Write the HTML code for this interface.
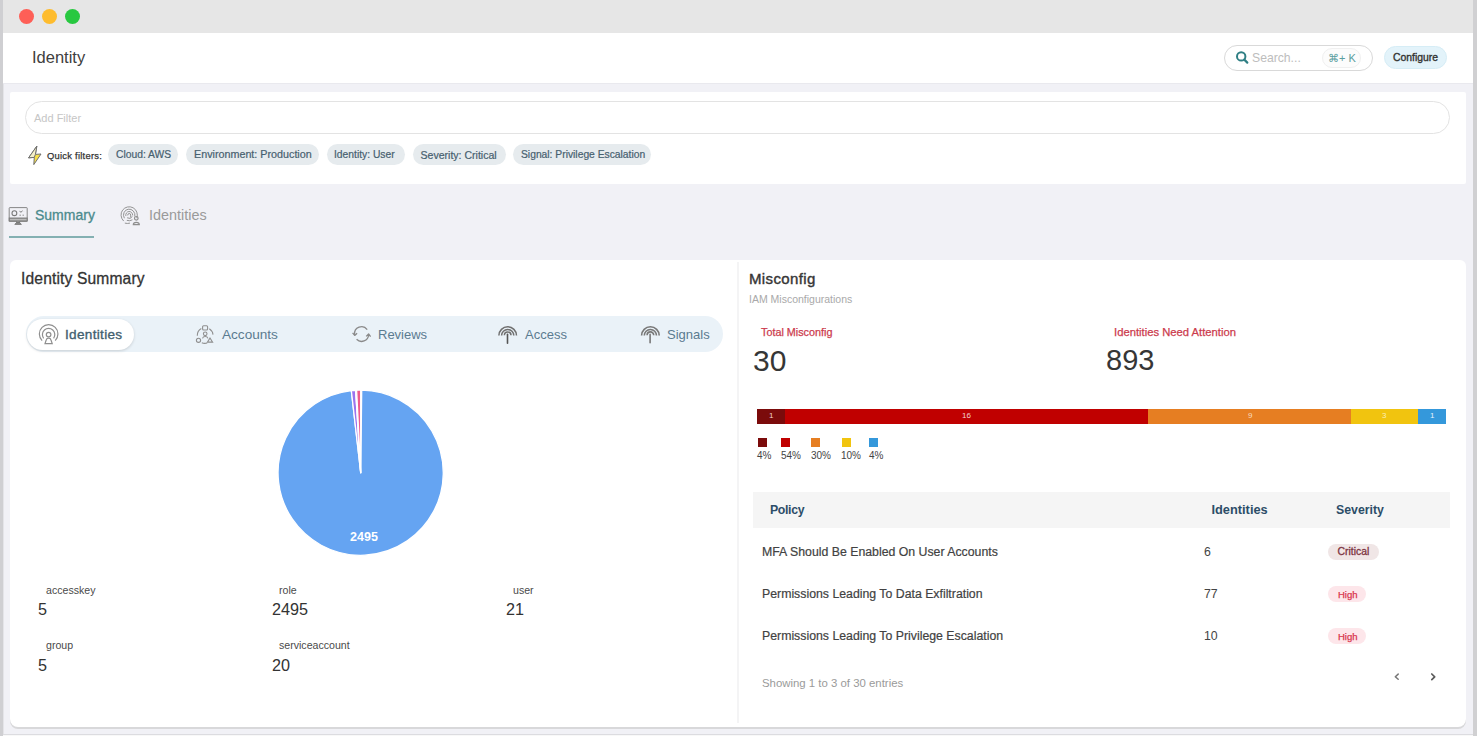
<!DOCTYPE html>
<html><head><meta charset="utf-8">
<style>
*{margin:0;padding:0;box-sizing:border-box}
html,body{width:1477px;height:736px;overflow:hidden;background:#f1f1f6;font-family:"Liberation Sans",sans-serif;color:#333}
.a{position:absolute}
.t{position:absolute;line-height:1;white-space:nowrap}
#lstrip{left:0;top:0;width:3px;height:736px;background:#cfcfd2}
#rstrip{left:1473px;top:0;width:4px;height:736px;background:#d0d0d2}
#titlebar{left:3px;top:0;width:1470px;height:33px;background:#e6e6e6}
.dot{position:absolute;top:9px;width:15px;height:15px;border-radius:50%}
#header{left:3px;top:33px;width:1470px;height:50px;background:#fff}
#fcard{left:10px;top:92px;width:1456px;height:92px;background:#fff;border-radius:2px}
#finput{left:25px;top:101px;width:1425px;height:33px;border:1px solid #e3e3e3;border-radius:17px;background:#fff}
.chip{position:absolute;top:144px;height:21px;border-radius:11px;background:#e6ebee}
.chipt{color:#46606f;-webkit-text-stroke:0.2px #46606f}
#main{left:10px;top:260px;width:1456px;height:467px;background:#fff;border-radius:6px 6px 8px 8px;box-shadow:0 2px 0 #d8d8da}
#divider{left:737px;top:262px;width:2px;height:461px;background:#f4f4f5}
#seg{left:26px;top:316px;width:697px;height:36px;border-radius:18px;background:#eaf2f8}
#segsel{left:27px;top:319px;width:107px;height:31px;border-radius:16px;background:#fff;box-shadow:0 1px 3px rgba(0,0,0,.15)}
#thead{left:753px;top:492px;width:697px;height:36px;background:#f5f5f5}
.badge{position:absolute;border-radius:8px}
</style></head><body>
<div class="a" id="lstrip"></div>
<div class="a" style="left:3px;top:83px;width:1px;height:653px;background:#e4e4e8"></div>
<div class="a" id="titlebar"></div>
<div class="a" id="rstrip"></div>
<div class="dot" style="left:19px;background:#fe5f57"></div>
<div class="dot" style="left:42px;background:#febc2e"></div>
<div class="dot" style="left:65px;background:#28c840"></div>

<div class="a" id="header"></div>
<div class="a" style="left:3px;top:83px;width:1470px;height:1px;background:#e9e9ee"></div>
<div class="t" style="left:32px;top:48.8px;font-size:16.5px;color:#404040">Identity</div>

<!-- search -->
<div class="a" style="left:1224px;top:45px;width:149px;height:26px;border:1px solid #d9d9d9;border-radius:13px;background:#fff"></div>
<svg class="a" style="left:1230px;top:45px" width="30" height="25" viewBox="0 0 30 25" fill="none" stroke="#2f7f84"><circle cx="11.2" cy="11.4" r="4.2" stroke-width="2"/><path d="M14.3 14.6L17.3 17.6" stroke-width="2.2" stroke-linecap="round"/></svg>
<div class="t" style="left:1252px;top:51.5px;font-size:12.2px;color:#bdbdbd">Search...</div>
<div class="a" style="left:1322px;top:48px;width:39px;height:20px;border-radius:10px;background:#fcfcfc;border:1px solid #f0f0f0"></div>
<div class="t" style="left:1328px;top:53px;font-size:11px;color:#5a9ea0">⌘+ K</div>
<!-- configure -->
<div class="a" style="left:1384px;top:46px;width:63px;height:23px;border-radius:12px;background:#e3f3fa;border:1px solid #d6edf6"></div>
<div class="t" style="left:1393px;top:53px;font-size:10.4px;color:#333;-webkit-text-stroke:0.35px #333">Configure</div>

<!-- filter card -->
<div class="a" id="fcard"></div>
<div class="a" id="finput"></div>
<div class="t" style="left:34px;top:112.8px;font-size:11px;color:#c6c6c6">Add Filter</div>
<svg class="a" style="left:14px;top:140px" width="35" height="30" viewBox="0 0 35 30"><path d="M22.8 6.2 L14.6 17.8 L20.3 17.4 L19.8 24.6 L27 14 L21.4 14.4 Z" fill="#f7e04a" stroke="#6f6f6f" stroke-width="1" stroke-linejoin="round"/><path d="M22.8 6.2 L14.6 17.8 L20.3 17.4 L21.4 14.4 Z" fill="#f4f0c8" stroke="#6f6f6f" stroke-width="1" stroke-linejoin="round"/></svg>
<div class="t" style="left:47px;top:150.5px;font-size:9.4px;letter-spacing:0.25px;color:#333;-webkit-text-stroke:0.25px #333">Quick filters:</div>
<div class="chip" style="left:108px;width:70px"></div>
<div class="t chipt" style="left:116px;top:150.2px;font-size:10.3px">Cloud: AWS</div>
<div class="chip" style="left:186px;width:133px"></div>
<div class="t chipt" style="left:194px;top:149.3px;font-size:10.75px">Environment: Production</div>
<div class="chip" style="left:327px;width:78px"></div>
<div class="t chipt" style="left:334px;top:150.2px;font-size:10.3px">Identity: User</div>
<div class="chip" style="left:413px;width:93px"></div>
<div class="t chipt" style="left:420.5px;top:149.5px;font-size:10.55px">Severity: Critical</div>
<div class="chip" style="left:513px;width:138px"></div>
<div class="t chipt" style="left:521px;top:150.2px;font-size:10.3px">Signal: Privilege Escalation</div>

<!-- tabs -->
<svg class="a" style="left:4px;top:200px" width="30" height="30" viewBox="0 0 30 30" fill="none" stroke="#7a7a7a" stroke-width="0.9"><rect x="5.2" y="7.6" width="18" height="13.6" rx="0.6"/><rect x="5.2" y="18" width="18" height="3.2" fill="#9a9a9a" stroke="#7a7a7a"/><path d="M6 19.6h16.4" stroke="#d8d8d8" stroke-width="0.6"/><circle cx="10.4" cy="13.2" r="2.4" stroke-width="1.1"/><path d="M15.5 11.3l1.5 0.9 1.6-1.4M20 11v0.1M15.5 15.2h1.3M18.6 15.2h1.2" stroke-width="1"/><path d="M12.5 21.2v1.4h3.2v-1.4M10.8 24.4h6.6l-1.7-1.8h-3.2z" fill="#8a8a8a"/></svg>
<div class="t" style="left:35px;top:208.1px;font-size:14px;color:#4b8b8d;-webkit-text-stroke:0.3px #4b8b8d">Summary</div>
<div class="a" style="left:9px;top:236px;width:85px;height:2px;background:#84b0b2"></div>
<svg class="a" style="left:117px;top:200px" width="30" height="30" viewBox="0 0 30 30" fill="none" stroke="#8e8e8e" stroke-width="0.95" stroke-linecap="round"><path d="M6.4 20.8A8.2 8.2 0 1 1 19.9 17.8"/><path d="M7.2 17.9A5.8 5.8 0 1 1 17.9 16"/><path d="M8.75 15.6A3.5 3.5 0 1 1 15.7 15"/><path d="M15.2 16.8A3.5 3.5 0 0 1 10.5 18"/><path d="M10.7 15A1.5 1.5 0 0 1 13.7 15V17"/><path d="M15.1 20A5.8 5.8 0 0 1 10.2 20.5"/><path d="M8.2 23.2A8.2 8.2 0 0 0 12.6 23.2"/><circle cx="19.3" cy="18.3" r="1.8" stroke-width="1.2"/><path d="M16.3 24.6a3 2.3 0 0 1 6 0z" stroke-width="1.2"/></svg>
<div class="t" style="left:149px;top:208.1px;font-size:14.4px;color:#9a9a9a">Identities</div>

<!-- main card -->
<div class="a" id="main"></div>
<div class="a" id="divider"></div>
<div class="t" style="left:21px;top:271.3px;font-size:15.6px;letter-spacing:0.15px;color:#333;-webkit-text-stroke:0.3px #333">Identity Summary</div>

<div class="a" id="seg"></div>
<div class="a" id="segsel"></div>

<!-- misconfig -->
<div class="t" style="left:749px;top:271px;font-size:15px;letter-spacing:0.36px;color:#363636;-webkit-text-stroke:0.4px #363636">Misconfig</div>
<div class="t" style="left:749px;top:293.8px;font-size:10.5px;color:#a9a9a9">IAM Misconfigurations</div>
<div class="t" style="left:761px;top:326.9px;font-size:10.8px;color:#cc3b4d;-webkit-text-stroke:0.25px #cc3b4d">Total Misconfig</div>
<div class="t" style="left:753px;top:345.9px;font-size:30px;color:#363636">30</div>
<div class="t" style="left:1114px;top:326.8px;font-size:11.25px;color:#cc3b4d;-webkit-text-stroke:0.25px #cc3b4d">Identities Need Attention</div>
<div class="t" style="left:1106px;top:346.3px;font-size:29px;color:#363636">893</div>

<div class="a" style="left:757px;top:409px;width:28px;height:15px;background:#7b0b0b"></div>
<div class="a" style="left:785px;top:409px;width:363px;height:15px;background:#c00000"></div>
<div class="a" style="left:1148px;top:409px;width:203px;height:15px;background:#e67e22"></div>
<div class="a" style="left:1351px;top:409px;width:67px;height:15px;background:#f1c40f"></div>
<div class="a" style="left:1418px;top:409px;width:28px;height:15px;background:#3498db"></div>

<div class="a" id="thead"></div>
<div class="t" style="left:770px;top:504.2px;font-size:12.3px;letter-spacing:-0.35px;color:#2c4d68;font-weight:bold">Policy</div>
<div class="t" style="left:1211.5px;top:504.2px;font-size:12.8px;color:#2c4d68;font-weight:bold">Identities</div>
<div class="t" style="left:1336px;top:504.2px;font-size:12.3px;color:#2c4d68;font-weight:bold">Severity</div>


<!-- segmented items -->
<svg class="a" style="left:34px;top:320px" width="30" height="30" viewBox="0 0 30 30" fill="none" stroke="#8f8f8f" stroke-width="1.2"><path d="M8.1 20.6A9.3 9.3 0 1 1 21.2 20.6"/><path d="M9.6 18.3A6.2 6.2 0 1 1 19.6 18.3"/><circle cx="14.6" cy="14.6" r="2.3"/><path d="M11 23.6l1.2-3.6a2.5 2.5 0 0 1 4.8 0l1.2 3.6z"/></svg>
<div class="t" style="left:65px;top:328.3px;font-size:13.6px;letter-spacing:0.3px;color:#42606f;-webkit-text-stroke:0.35px #42606f">Identities</div>
<svg class="a" style="left:190px;top:320px" width="30" height="30" viewBox="0 0 30 30" fill="none" stroke="#8f8f8f" stroke-width="1.1"><rect x="12.6" y="5.8" width="5" height="4.2" rx="1"/><circle cx="15.2" cy="13.8" r="1.8"/><path d="M12.5 18.3a2.8 2.5 0 0 1 5.4 0"/><circle cx="8.5" cy="20.3" r="2.1"/><path d="M20 18l2.6 4.1h-5.2z"/><path d="M7.3 15.8A8 8 0 0 1 11.3 8.5"/><path d="M19.3 8.7A8 8 0 0 1 23 14.6"/><path d="M11.8 22.8A8 8 0 0 0 17.2 23"/></svg>
<div class="t" style="left:222px;top:327.7px;font-size:13px;color:#5b7b90;font-size:13.6px">Accounts</div>
<svg class="a" style="left:347px;top:320px" width="30" height="30" viewBox="0 0 30 30" fill="none" stroke="#8a8a8a" stroke-width="1.3"><path d="M7.6 14.5A7 7 0 0 1 20.2 9.6"/><path d="M21.6 14.8A7 7 0 0 1 9.6 19.3"/><path d="M5.6 12.8l2.1 2.6 2.4-2.2" stroke-linejoin="round"/><path d="M19.2 16.4l2.4-2.4 2 2.6" stroke-linejoin="round"/></svg>
<div class="t" style="left:378px;top:327.7px;font-size:13px;color:#5b7b90">Reviews</div>
<svg class="a" style="left:493px;top:318px" width="30" height="30" viewBox="0 0 30 30" fill="none" stroke="#707070" stroke-width="1.5"><path d="M5.9 17.6A8.8 8.8 0 0 1 23.5 17.6"/><path d="M8.6 17.6A6.1 6.1 0 0 1 20.8 17.6"/><path d="M11.4 17.2A3.3 3.3 0 0 1 18 17.2"/><path d="M14.5 16.4V25.2" stroke="#555" stroke-width="1.6" stroke-linecap="round"/></svg>
<div class="t" style="left:525px;top:327.7px;font-size:13px;color:#5b7b90">Access</div>
<svg class="a" style="left:636px;top:318px" width="30" height="30" viewBox="0 0 30 30" fill="none" stroke="#787878" stroke-width="1.6"><path d="M5.6 17.6A8.8 8.8 0 0 1 23.2 17.6"/><path d="M8.3 17.6A6.1 6.1 0 0 1 20.5 17.6"/><path d="M11.1 17.2A3.3 3.3 0 0 1 17.7 17.2"/><path d="M14.1 16.4V24.8" stroke-width="1.6" stroke-linecap="round"/></svg>
<div class="t" style="left:667px;top:327.7px;font-size:13px;color:#5b7b90">Signals</div>

<!-- pie -->
<svg class="a" style="left:278px;top:390px" width="166" height="166" viewBox="0 0 166 166">
<path d="M82.70 82.70 L82.70 0.10 A82.6 82.6 0 0 1 83.72 0.11 Z" fill="#f4a3b8" stroke="#fff" stroke-width="1.3" stroke-linejoin="round"/>
<path d="M82.70 82.70 L83.72 0.11 A82.6 82.6 0 1 1 73.34 0.63 Z" fill="#65a4f2" stroke="#fff" stroke-width="1.3" stroke-linejoin="round"/>
<path d="M82.70 82.70 L73.34 0.63 A82.6 82.6 0 0 1 77.61 0.26 Z" fill="#9b74ef" stroke="#fff" stroke-width="1.3" stroke-linejoin="round"/>
<path d="M82.70 82.70 L77.61 0.26 A82.6 82.6 0 0 1 78.62 0.20 Z" fill="#f7a6c4" stroke="#fff" stroke-width="1.3" stroke-linejoin="round"/>
<path d="M82.70 82.70 L78.62 0.20 A82.6 82.6 0 0 1 82.70 0.10 Z" fill="#ee5b8e" stroke="#fff" stroke-width="1.3" stroke-linejoin="round"/>
<text x="86" y="151" fill="#fff" font-size="12.5" font-weight="bold" text-anchor="middle" font-family="Liberation Sans">2495</text>
</svg>

<!-- stats -->
<div class="t" style="left:46px;top:585.3px;font-size:10.6px;color:#4a4a4a">accesskey</div>
<div class="t" style="left:38px;top:600.8px;font-size:16.2px;color:#333">5</div>
<div class="t" style="left:279px;top:585.3px;font-size:10.6px;color:#4a4a4a">role</div>
<div class="t" style="left:272px;top:600.8px;font-size:16.2px;color:#333">2495</div>
<div class="t" style="left:513px;top:585.3px;font-size:10.6px;color:#4a4a4a">user</div>
<div class="t" style="left:506px;top:600.8px;font-size:16.2px;color:#333">21</div>
<div class="t" style="left:46px;top:640.2px;font-size:10.6px;color:#4a4a4a">group</div>
<div class="t" style="left:38px;top:656.5px;font-size:16.2px;color:#333">5</div>
<div class="t" style="left:279px;top:640.2px;font-size:10.6px;color:#4a4a4a">serviceaccount</div>
<div class="t" style="left:272px;top:656.5px;font-size:16.2px;color:#333">20</div>

<!-- bar labels -->
<div class="t" style="left:769px;top:412px;font-size:8px;color:#f3d0d0">1</div>
<div class="t" style="left:962px;top:412px;font-size:8px;color:#f3d0d0">16</div>
<div class="t" style="left:1248px;top:412px;font-size:8px;color:#f7dcc0">9</div>
<div class="t" style="left:1382px;top:412px;font-size:8px;color:#fbeeb8">3</div>
<div class="t" style="left:1430px;top:412px;font-size:8px;color:#e6f2fb">1</div>
<!-- legend -->
<div class="a" style="left:758px;top:438px;width:9px;height:9px;background:#7b0b0b"></div>
<div class="a" style="left:781px;top:438px;width:9px;height:9px;background:#c00000"></div>
<div class="a" style="left:811px;top:438px;width:9px;height:9px;background:#e67e22"></div>
<div class="a" style="left:842px;top:438px;width:9px;height:9px;background:#f1c40f"></div>
<div class="a" style="left:869px;top:438px;width:9px;height:9px;background:#3498db"></div>
<div class="t" style="left:757px;top:451px;font-size:10px;color:#444">4%</div>
<div class="t" style="left:781px;top:451px;font-size:10px;color:#444">54%</div>
<div class="t" style="left:811px;top:451px;font-size:10px;color:#444">30%</div>
<div class="t" style="left:841px;top:451px;font-size:10px;color:#444">10%</div>
<div class="t" style="left:869px;top:451px;font-size:10px;color:#444">4%</div>

<!-- rows -->
<div class="t" style="left:762px;top:545.5px;font-size:12.3px;color:#424242;-webkit-text-stroke:0.2px #424242">MFA Should Be Enabled On User Accounts</div>
<div class="t" style="left:1204px;top:546px;font-size:12.3px;color:#444">6</div>
<div class="badge" style="left:1328px;top:544px;width:51px;height:16px;background:#f0e6e6"></div>
<div class="t" style="left:1337.5px;top:547px;font-size:10.4px;color:#7d3442;-webkit-text-stroke:0.3px #7d3442">Critical</div>
<div class="t" style="left:762px;top:587.5px;font-size:12.3px;color:#424242;-webkit-text-stroke:0.2px #424242">Permissions Leading To Data Exfiltration</div>
<div class="t" style="left:1204px;top:588px;font-size:12.3px;color:#444">77</div>
<div class="badge" style="left:1328px;top:586px;width:38px;height:16px;background:#fde6ea"></div>
<div class="t" style="left:1338px;top:590px;font-size:9.5px;color:#d8334a;-webkit-text-stroke:0.25px #d8334a">High</div>
<div class="t" style="left:762px;top:629.5px;font-size:12.3px;color:#424242;-webkit-text-stroke:0.2px #424242">Permissions Leading To Privilege Escalation</div>
<div class="t" style="left:1204px;top:630px;font-size:12.3px;color:#444">10</div>
<div class="badge" style="left:1328px;top:628px;width:38px;height:16px;background:#fde6ea"></div>
<div class="t" style="left:1338px;top:632px;font-size:9.5px;color:#d8334a;-webkit-text-stroke:0.25px #d8334a">High</div>
<div class="t" style="left:762px;top:678px;font-size:11.4px;color:#9a9a9a">Showing 1 to 3 of 30 entries</div>
<svg class="a" style="left:1385px;top:665px" width="60" height="25" viewBox="0 0 60 25" fill="none" stroke-width="1.5" stroke-linecap="round" stroke-linejoin="round"><path d="M13.2 9.1L10.3 11.7l2.9 2.6" stroke="#777"/><path d="M46.8 9l2.9 2.8-2.9 2.8" stroke="#5a5a5a" stroke-width="1.7"/></svg>


<!-- bottom edges -->
<div class="a" style="left:3px;top:734px;width:1470px;height:1px;background:#dcdce0"></div>
<div class="a" style="left:3px;top:735px;width:1470px;height:1px;background:#f8f8f8"></div>
</body></html>
